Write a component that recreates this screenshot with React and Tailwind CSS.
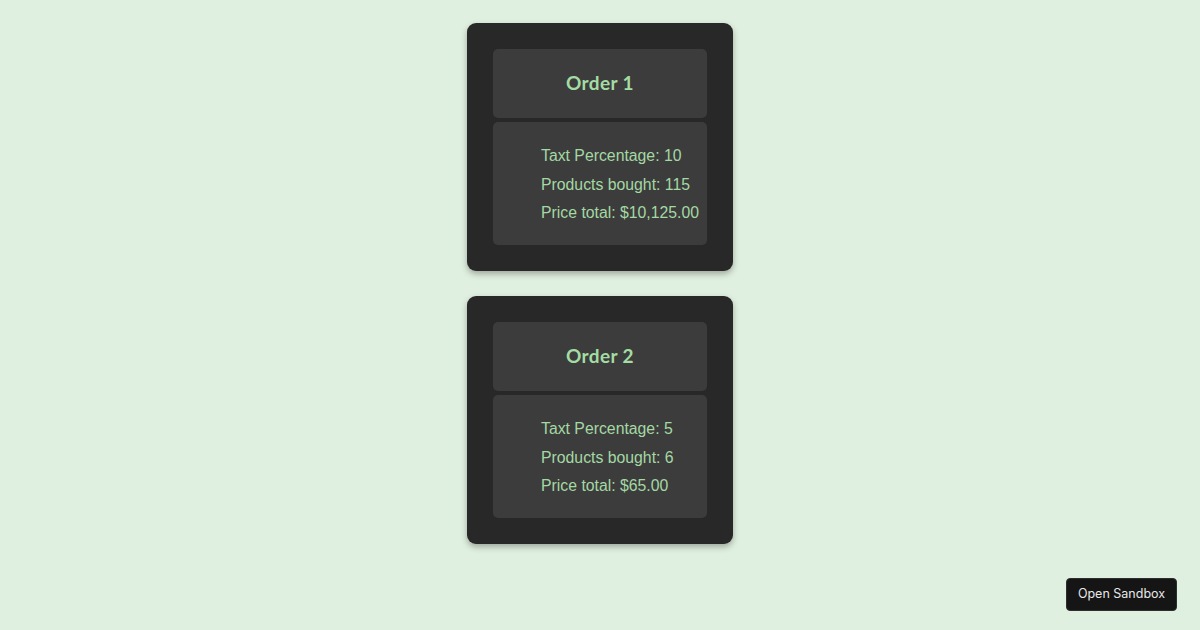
const orders = [
    { id: 1, tax: 10, products: 115, total: '$10,125.00' },
    { id: 2, tax: 5, products: 6, total: '$65.00' },
];

function OrderCard({ id, tax, products, total }) {
    return (
        <div className="w-[266px] h-[248px] bg-[#282828] rounded-[9px] p-[26px] flex flex-col gap-[4px] shadow-[0_3px_6px_rgba(0,0,0,0.3)]">
            <div className="h-[69px] shrink-0 bg-[#3c3c3c] rounded-[5px] flex items-center justify-center">
                <h2 className="text-[19px] font-bold text-[#a4dca4] font-['Lato',sans-serif] tracking-[0.4px]">
                    Order {id}
                </h2>
            </div>
            <div className="flex-1 bg-[#3c3c3c] rounded-[5px] pl-[48px] pt-[20px]">
                <ul className="text-[15.8px] leading-[28.5px] text-[#a4d8a4] font-['Liberation_Sans',sans-serif] whitespace-nowrap">
                    <li>Taxt Percentage: {tax}</li>
                    <li>Products bought: {products}</li>
                    <li>Price total: {total}</li>
                </ul>
            </div>
        </div>
    );
}

export default function App() {
    return (
        <div className="w-[1200px] h-[630px] bg-[#e0f0e0] relative flex flex-col items-center pt-[23px] gap-[25px]">
            {orders.map((o) => (
                <OrderCard key={o.id} {...o} />
            ))}

            <button className="absolute right-[23px] bottom-[19px] w-[111px] h-[33px] bg-[#151515] text-[#e8e8e8] rounded-[4px] text-[12.5px] font-['Inter',sans-serif] border border-[#2e2e2e]">
                Open Sandbox
            </button>
        </div>
    );
}
